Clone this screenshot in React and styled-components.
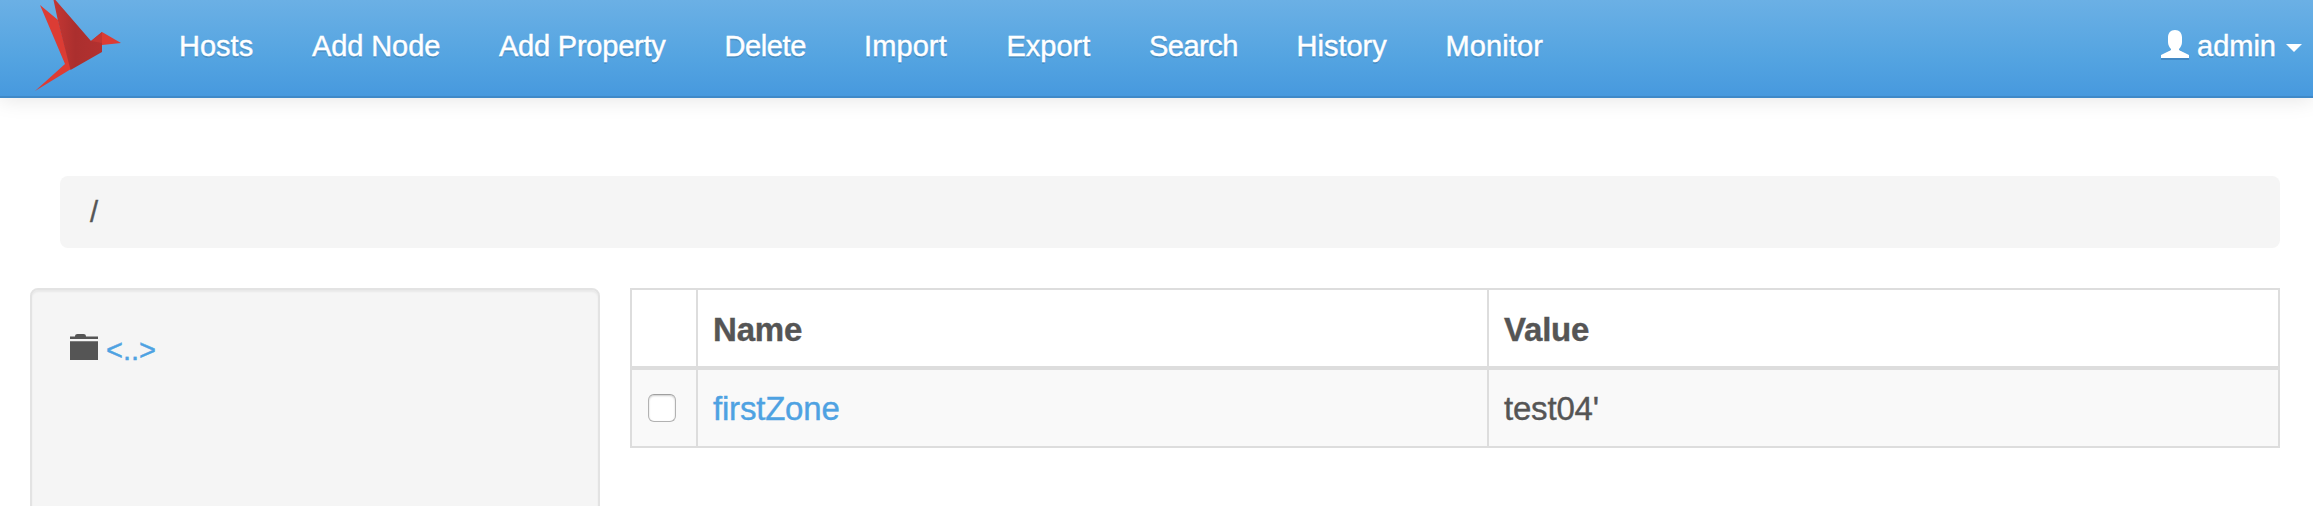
import React from 'react';
import styled, { createGlobalStyle } from 'styled-components';

const GlobalStyle = createGlobalStyle`
  *, *::before, *::after { box-sizing: border-box; }
  html, body { margin: 0; height: 506px; overflow: hidden; }
  body {
    background: #fff;
    color: #555;
    font-family: "Liberation Sans", Helvetica, Arial, sans-serif;
    font-size: 33px;
    -webkit-text-stroke-width: 0.4px;
  }
  a { color: #4ea2e2; text-decoration: none; }
`;

const Page = styled.div`
  height: 506px;
  overflow: hidden;
`;

const Navbar = styled.header`
  display: flex;
  height: 98px;
  padding: 0 11px 0 34px;
  border-bottom: 2px solid #3f89c8;
  background: linear-gradient(#6bb0e5, #54a4e1 60%, #4799de);
  box-shadow: 0 2px 20px rgba(0, 0, 0, 0.1);
`;

const Logo = styled.svg`
  width: 90px;
  height: 94px;
  flex: none;
`;

const Nav = styled.nav`
  display: flex;
  flex: 1;
  margin-left: 25px;
`;

const NavItem = styled.a`
  width: ${(p) => p.$width}px;
  padding-left: 30px;
  font-size: 29px;
  line-height: 92px;
  letter-spacing: ${(p) => p.$tracking || 0}px;
  white-space: nowrap;
  text-shadow: 0 2px 0 rgba(0, 0, 0, 0.12);
  && { color: #fff; }
`;

const UserMenu = styled.div`
  display: flex;
  color: #fff;
  font-size: 29px;
  line-height: 92px;
  text-shadow: 0 2px 0 rgba(0, 0, 0, 0.12);
`;

const UserIcon = styled.svg`
  width: 28px;
  height: 30px;
  margin: 30px 8px 0 0;
`;

const Caret = styled.span`
  width: 0;
  height: 0;
  margin: 44px 0 0 10px;
  border: 8px solid transparent;
  border-top-color: #fff;
  border-bottom: 0;
`;

const Breadcrumb = styled.div`
  height: 72px;
  margin: 78px 33px 40px 60px;
  padding-left: 30px;
  border-radius: 8px;
  background: #f5f5f5;
  font-size: 29px;
  line-height: 72px;
`;

const Columns = styled.main`
  display: flex;
  align-items: flex-start;
  gap: 30px;
  padding: 0 33px 0 30px;
`;

const Well = styled.aside`
  width: 570px;
  height: 400px;
  flex: none;
  padding: 38px;
  border: 2px solid #e3e3e3;
  border-radius: 8px;
  background: #f5f5f5;
  box-shadow: inset 0 2px 2px rgba(0, 0, 0, 0.05);
`;

const TreeNode = styled.div`
  display: flex;
  align-items: flex-start;
  gap: 8px;
  height: 42px;
  font-size: 29px;
  line-height: 44px;
`;

const FolderIcon = styled.svg`
  width: 28px;
  height: 26px;
  margin-top: 6px;
`;

const Table = styled.div`
  flex: 1;
  border: 2px solid #ddd;
`;

const Row = styled.div`
  display: grid;
  grid-template-columns: 66px 791px 1fr;
  height: ${(p) => (p.$head ? 80 : 76)}px;
  border-bottom: ${(p) => (p.$head ? '4px solid #ddd' : '0')};
  background: ${(p) => (p.$head ? '#fff' : '#f9f9f9')};
  font-weight: ${(p) => (p.$head ? 700 : 400)};
  line-height: ${(p) => (p.$head ? 79 : 77)}px;
`;

const Cell = styled.div`
  height: 76px;
  padding-left: ${(p) => (p.$control ? 16 : 15)}px;
  border-right: 2px solid #ddd;
  letter-spacing: -0.2px;
  &:last-child { border-right: 0; }
`;

const Checkbox = styled.input`
  appearance: none;
  display: block;
  width: 28px;
  height: 28px;
  margin: 24px 0 0;
  border: 1px solid #b2b2b2;
  border-top-color: #a0a0a0;
  border-radius: 6px;
  background: #fff;
  box-shadow: inset 0 1px 2px rgba(0, 0, 0, 0.2);
`;

const links = [
  { label: 'Hosts', width: 133 },
  { label: 'Add Node', width: 187, tracking: -0.1 },
  { label: 'Add Property', width: 225.5, tracking: -0.22 },
  { label: 'Delete', width: 139.5, tracking: -0.4 },
  { label: 'Import', width: 142.5, tracking: 0.1 },
  { label: 'Export', width: 142.5 },
  { label: 'Search', width: 147.5, tracking: -0.5 },
  { label: 'History', width: 149 },
  { label: 'Monitor', width: 160, tracking: 0.1 },
];

export default function App() {
  return (
    <Page>
      <GlobalStyle />
      <Navbar>
        <Logo viewBox="34 0 90 94" aria-hidden="true">
          <defs>
            <linearGradient id="wing" x1="0" x2="1">
              <stop offset="0" stopColor="#c43733" />
              <stop offset=".45" stopColor="#ab2f2e" />
              <stop offset="1" stopColor="#b33130" />
            </linearGradient>
          </defs>
          <path d="M40 5L58 20L71 69L35 91L65 64Z" fill="#dc3c34" />
          <path d="M53.5 0H55.5L91 41L102 32V52L70.5 70L58 21Z" fill="url(#wing)" />
          <path d="M91 41L102 32V43Z" fill="#c43733" />
          <path d="M102 32L121 43L102 45Z" fill="#dc3c34" />
        </Logo>
        <Nav>
          {links.map((l) => (
            <NavItem key={l.label} $width={l.width} $tracking={l.tracking}>
              {l.label}
            </NavItem>
          ))}
        </Nav>
        <UserMenu>
          <UserIcon viewBox="0 0 28 30" aria-hidden="true">
            <path d="M0 30V26L9 20H19L28 26V30Z" fill="#4389c5" />
            <path d="M14 0C18.5 0 21 3 21 7.5V12C21 15 19.5 17.5 18 19V20L28 25V28H0V25L10 20V19C8.5 17.5 7 15 7 12V7.5C7 3 9.5 0 14 0Z" fill="#fff" />
          </UserIcon>
          admin
          <Caret />
        </UserMenu>
      </Navbar>
      <Breadcrumb>/</Breadcrumb>
      <Columns>
        <Well>
          <TreeNode>
            <FolderIcon viewBox="0 0 28 26" aria-hidden="true">
              <path d="M0 2.5H5C5 .8 6 0 7.5 0H13.5C15 0 16 .8 16 2.5H28V5H0ZM0 7.3H28V26H0Z" fill="#555" />
            </FolderIcon>
            <a>&lt;..&gt;</a>
          </TreeNode>
        </Well>
        <Table>
          <Row $head>
            <Cell />
            <Cell>Name</Cell>
            <Cell>Value</Cell>
          </Row>
          <Row>
            <Cell $control><Checkbox type="checkbox" /></Cell>
            <Cell><a>firstZone</a></Cell>
            <Cell>test04'</Cell>
          </Row>
        </Table>
      </Columns>
    </Page>
  );
}
